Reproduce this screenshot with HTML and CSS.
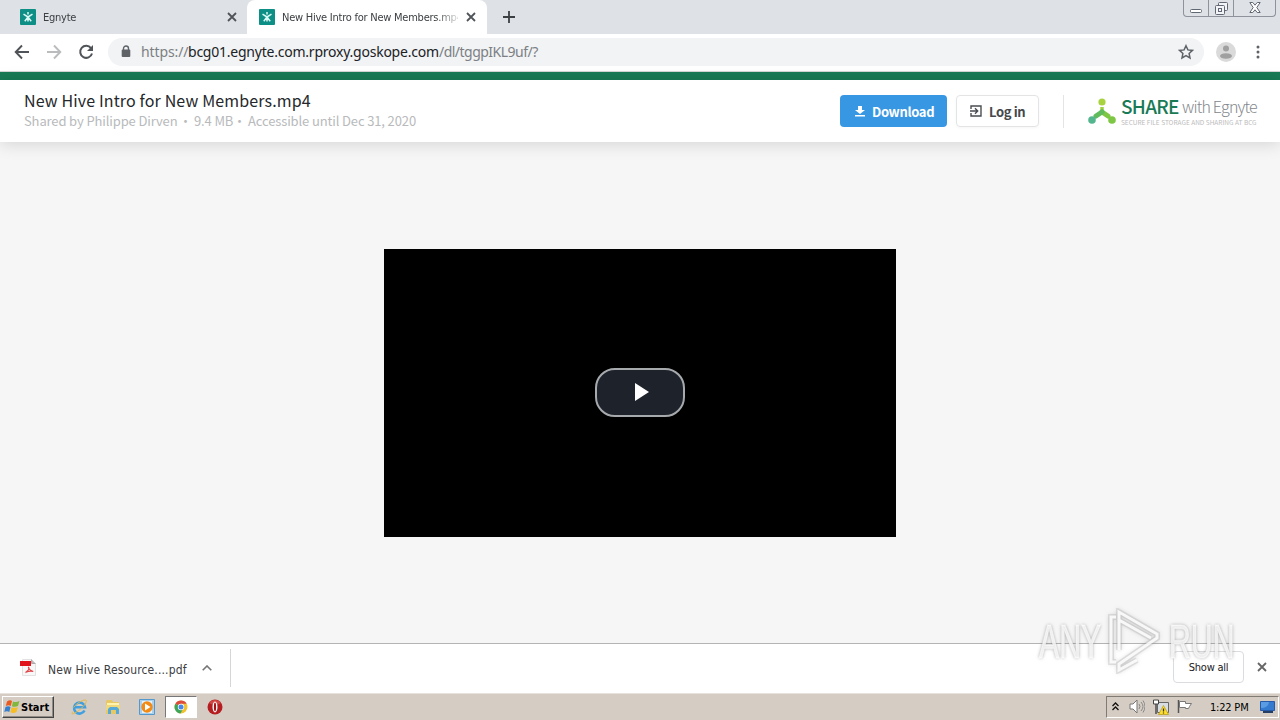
FILE: index.html
```html
<!DOCTYPE html>
<html lang="en">
<head>
  <meta charset="UTF-8" />
  <meta name="viewport" content="width=device-width, initial-scale=1.0"/>
  <title>New Hive Intro for New Members.mp4</title>
  <link rel="stylesheet" href="styles.css">
</head>
<body>

  <svg class="defs" width="0" height="0">
    <symbol id="egnyte" viewBox="0 0 16 16">
      <rect width="16" height="16" rx="1" fill="#0d8f86"/>
      <path d="M8 3v2.500M8 8v4.500M3.500 5.200L8 8l4.500-2.800M4.800 12.300L8 8l3.200 4.300" fill="none" stroke="#d9f7f4" stroke-width="1.500"/>
    </symbol>
    <symbol id="close" viewBox="0 0 10 10">
      <path d="M1 1l8 8M9 1L1 9" fill="none" stroke="currentColor" stroke-width="1.8"/>
    </symbol>
  </svg>

  <!-- Browser tabs -->
  <div class="tab-strip">
    <div class="tab">
      <svg class="favicon"><use href="#egnyte"/></svg>
      <span class="tab-title short">Egnyte</span>
      <svg class="tab-close"><use href="#close"/></svg>
    </div>
    <div class="tab active">
      <svg class="favicon"><use href="#egnyte"/></svg>
      <span class="tab-title">New Hive Intro for New Members.mp4</span>
      <svg class="tab-close"><use href="#close"/></svg>
    </div>
    <svg class="new-tab" viewBox="0 0 12 12"><path d="M6 0v12M0 6h12" stroke="#3c4043" stroke-width="1.8"/></svg>
    <div class="window-buttons">
      <span class="win-btn min"><svg width="12" height="4"><rect x=".5" y=".5" width="11" height="3" rx="1" fill="#fff" stroke="#626873"/></svg></span>
      <span class="win-btn max"><svg width="13" height="13" fill="#f3f4f7" stroke="#626873"><rect x="3.500" y=".5" width="9" height="8" rx="1"/><rect x=".5" y="3.500" width="9" height="9" rx="1"/><rect x="3.500" y="6.500" width="3" height="3"/></svg></span>
      <span class="win-btn end"><svg width="12" height="11"><path d="M.8.5h3L6 3.200 8.200.5h3L7.800 5.500l3.400 5h-3L6 7.800 3.800 10.500h-3l3.400-5z" fill="#fff" stroke="#626873"/></svg></span>
    </div>
  </div>

  <!-- Address bar -->
  <div class="toolbar">
    <svg class="nav-icon" viewBox="0 0 16 16"><path d="M15 8H2M8 1.500L1.700 8 8 14.500" fill="none" stroke="#505459" stroke-width="1.9"/></svg>
    <svg class="nav-icon" viewBox="0 0 16 16"><path d="M1 8h13M8 1.500L14.300 8 8 14.500" fill="none" stroke="#babcbe" stroke-width="1.9"/></svg>
    <svg class="nav-icon" viewBox="0 0 16 16"><path d="M13 4.200A6 6 0 1 0 14 9.500" fill="none" stroke="#505459" stroke-width="2"/><path d="M15 1v6H9z" fill="#505459"/></svg>
    <div class="omnibox">
      <svg class="lock" viewBox="0 0 10 13"><path d="M2.500 5V3.500a2.500 2.500 0 0 1 5 0V5" fill="none" stroke="#5f6368" stroke-width="1.400"/><rect x=".7" y="4.600" width="8.600" height="7.400" rx="1" fill="#5f6368"/></svg>
      <span class="url"><span class="scheme">https://</span><span class="host">bcg01.egnyte.com.rproxy.goskope.com</span><span class="path">/dl/tggpIKL9uf/?</span></span>
      <svg class="star" viewBox="0 0 16 16"><path d="M8 1.700l1.900 4.200 4.600.5-3.400 3.100.9 4.500-4-2.300-4 2.300.9-4.500-3.400-3.100 4.600-.5z" fill="none" stroke="#5f6368" stroke-width="1.500"/></svg>
    </div>
    <svg class="avatar" viewBox="0 0 20 20"><circle cx="10" cy="10" r="10" fill="#dadada"/><circle cx="10" cy="6.500" r="3" fill="#a0a0a0"/><ellipse cx="10" cy="14" rx="6" ry="2.800" fill="#a0a0a0"/></svg>
    <svg class="menu" viewBox="0 0 4 14" fill="#5f6368"><circle cx="2" cy="2" r="1.500"/><circle cx="2" cy="7" r="1.500"/><circle cx="2" cy="12" r="1.500"/></svg>
  </div>

  <div class="brand-bar"></div>

  <header class="file-header">
    <div class="file-info">
      <h1>New Hive Intro for New Members.mp4</h1>
      <p><span class="owner">Shared by Philippe Dirven</span><i>·</i><span class="size">9.4 MB</span><i>·</i><span class="expires">Accessible until Dec 31, 2020</span></p>
    </div>
    <a class="btn download">
      <svg width="10" height="11"><path d="M3 0h4v4h3L5 8 0 4h3zM0 9h10v1.600H0z" fill="#fff"/></svg>
      <span>Download</span>
    </a>
    <a class="btn login">
      <svg width="12" height="12" fill="none" stroke="#4a4d50" stroke-width="1.400"><path d="M1 4V1h10v10H1V8M0 6h7M5 3.300L7.700 6 5 8.700"/></svg>
      <span>Log in</span>
    </a>
    <div class="logo">
      <svg width="28" height="27">
        <path d="M14 9v6" stroke="#a0d040" stroke-width="3.500"/>
        <path d="M14 14l6 4" stroke="#7dc744" stroke-width="5" stroke-linecap="round"/>
        <path d="M14 14l-6 4" stroke="#5fbb5c" stroke-width="5" stroke-linecap="round"/>
        <circle cx="14" cy="4" r="3.600" fill="#a9d23f"/>
        <circle cx="4" cy="22" r="3.800" fill="#54b68e"/>
        <circle cx="24" cy="22" r="3.800" fill="#7dc744"/>
      </svg>
      <div class="logo-text">
        <div class="logo-name"><b>SHARE</b><span>with Egnyte</span></div>
        <div class="tagline">SECURE FILE STORAGE AND SHARING AT BCG</div>
      </div>
    </div>
  </header>

  <main class="preview">
    <div class="player">
      <div class="play"><svg width="14" height="20"><path d="M0 1v18l14-9z" fill="#fff"/></svg></div>
    </div>
  </main>

  <!-- Downloads -->
  <div class="download-shelf">
    <div class="download-item">
      <svg width="16" height="17"><path d="M2.500.5h9l4 4v12h-13z" fill="#f8f8f8" stroke="#e2e2e2"/><path d="M11.500.5v4h4" fill="#bbb" stroke="#aaa"/><path d="M0 2h11v5H0z" fill="#e1131b"/><path d="M6 13c3-2 3.500-3 2.800-4.500s-1 2.500 4.500 4c-3-.8-5-.3-7.300.8z" fill="none" stroke="#e04548" stroke-width="1.100"/></svg>
      <span class="download-name">New Hive Resource....pdf</span>
      <svg class="chevron" width="10" height="6"><path d="M.7 5.300L5 1l4.300 4.300" fill="none" stroke="#757575" stroke-width="1.600"/></svg>
    </div>
    <span class="show-all">Show all</span>
    <svg class="shelf-close"><use href="#close"/></svg>
  </div>

  <!-- Windows taskbar -->
  <div class="taskbar">
    <div class="start">
      <svg width="17" height="16" viewBox="0 0 17 16"><path d="M3 2.500Q6 .5 8 2L6.800 7Q4.500 5.600 1.800 7z" fill="#e95c20"/><path d="M9 2.400Q12 4 15.500 2L14 7Q11 8.500 7.900 7.200z" fill="#82b73d"/><path d="M1.500 8Q4.300 6.600 6.500 8L5.300 13Q3 11.500.3 13z" fill="#347fce"/><path d="M7.600 8.200Q11 9.600 13.800 8L12.500 13Q9.500 14.800 6.400 13.300z" fill="#f6bd25"/></svg>
      <span>Start</span>
    </div>
    <span class="task ie"><svg width="18" height="18" viewBox="0 0 18 18"><path d="M14.500 12.500A5.500 5.500 0 1 1 15 9.300H5" fill="none" stroke="#3f9fe0" stroke-width="2.600"/><path d="M3 13.500C0 18 5 15.500 10 11.500S18.500 1.500 15 2 7 5 3.500 9.500" fill="none" stroke="#e6b844" stroke-width="1"/></svg></span>
    <span class="task"><svg width="16" height="16"><path d="M1 2l1-1h5l1 2h6v12H1z" fill="#e7c865"/><path d="M2 4h12v5H2z" fill="#fff2ad"/><path d="M1 6h14v5H1z" fill="#efd77b"/><path d="M3 15v-5l2-2h7l2 2v5h-3v-4H6v4z" fill="#55a9d9"/></svg></span>
    <span class="task"><svg width="16" height="16"><path d="M.5.5h15v15H.5z" fill="#a9d1ef" stroke="#5598cc"/><path d="M3 2h10v12H3z" fill="#e5f2fa"/><circle cx="8" cy="8" r="5.700" fill="#f28a16"/><path d="M6 4.500v7L11.500 8z" fill="#fff"/></svg></span>
    <span class="task current"><svg width="14" height="14" viewBox="0 0 14 14"><circle cx="7" cy="7" r="6.500" fill="#f2c12f"/><path d="M7 7L1.400 3.700a6.500 6.500 0 0 1 11.300 0H7z" fill="#dc4b3e"/><path d="M7 7l-5.600-3.300A6.500 6.500 0 0 0 6.500 13.500L9.500 8z" fill="#3da45b"/><circle cx="7" cy="7" r="3.200" fill="#fff"/><circle cx="7" cy="7" r="2.500" fill="#4687e8"/></svg></span>
    <span class="task opera"><svg width="16" height="16"><circle cx="8" cy="8" r="7.500" fill="#b51d20"/><path d="M2 4a7.500 7.500 0 0 1 12 0L8 7z" fill="#d04745"/><ellipse cx="8" cy="8" rx="2.500" ry="5.400" fill="#fff"/><ellipse cx="8" cy="8" rx="1.100" ry="4.400" fill="#a01418"/></svg></span>
    <div class="tray">
      <svg class="more" width="7" height="9"><path d="M.5 4l3-3 3 3M.5 8l3-3 3 3" fill="none" stroke="#111" stroke-width="1.300"/></svg>
      <svg class="sound" width="16" height="15"><path d="M1 5h3l4-4v13l-4-4H1z" fill="#fff" stroke="#777"/><path d="M10 5q2 2.500 0 5M12 3q4 4.500 0 9M14 1.500q4 6 0 12" fill="none" stroke="#888"/></svg>
      <svg class="network" width="16" height="16"><path d="M4.500 3.500h11v10h-11z" fill="#d7dde2" stroke="#666"/><path d="M3 5v10" stroke="#444" stroke-width="1.400"/><path d="M.5 1h5v4h-5z" fill="#fff" stroke="#444"/><path d="M10.500 6.500l5 9H5.500z" fill="#ffdf2b" stroke="#b69812" stroke-width=".7"/><path d="M10.500 9.500v3M10.500 13.500v1" stroke="#333" stroke-width="1.300"/></svg>
      <svg class="flag" width="16" height="15"><path d="M1.500 1v13" stroke="#555" stroke-width="1.500"/><path d="M2.500 2.500h6v2h6l-2 3 -1 2h-3v-1h-6z" fill="#fff" stroke="#777"/></svg>
      <span class="clock">1:22 PM</span>
      <svg class="desktop" width="15" height="14"><path d="M.5 1.500h14v9H.5z" fill="#347bd0" stroke="#245aa8"/><path d="M1 2h8q-1 6-8 6z" fill="#5a9ce3"/><path d="M3 11h10v2H3z" fill="#243f65"/></svg>
    </div>
  </div>

  <!-- Recording watermark -->
  <div class="watermark">
    <span class="mark-any">ANY</span>
    <svg class="mark-play" width="60" height="66"><path id="mark" d="M11 9H6v45h5M14 42V4l38 22v4L14 56v6l18-10M14 12l32 18M14 42V15" fill="none"/><use href="#mark" class="halo"/><use href="#mark" class="line"/></svg>
    <span class="mark-run">RUN</span>
  </div>

</body>
</html>
```
FILE: styles.css
```css
* {
  box-sizing: border-box;
}
body {
  margin: 0;
  width: 1280px;
  height: 720px;
  overflow: hidden;
  display: flex;
  flex-direction: column;
  position: relative;
  font-family: "DejaVu Sans Condensed", "DejaVu Sans", sans-serif;
  background: #f6f6f6;
}
svg {
  display: block;
  flex: none;
}
.defs {
  position: absolute;
}
.tab-strip {
  height: 34px;
  flex: none;
  display: flex;
  background: #dee1e6;
}
.tab {
  width: 247px;
  height: 34px;
  padding: 0 10px 0 20px;
  display: flex;
  align-items: center;
}
.tab.active {
  width: 240px;
  padding: 0 11px 0 12px;
  background: #fff;
  border-radius: 8px 8px 0 0;
}
.favicon {
  width: 16px;
  height: 16px;
}
.tab-title {
  width: 176px;
  margin-left: 7px;
  margin-right: 8px;
  overflow: hidden;
  white-space: nowrap;
  font-size: 11px;
  letter-spacing: -0.24px;
  color: #3c4043;
  -webkit-mask-image: linear-gradient(to right, #000 154px, transparent 180px);
  mask-image: linear-gradient(to right, #000 154px, transparent 180px);
}
.tab-close {
  width: 10px;
  height: 10px;
  color: #505459;
}
.new-tab {
  width: 12px;
  height: 12px;
  margin: 11px 0 0 16px;
}
.window-buttons {
  display: flex;
  height: 17px;
  width: 93px;
  margin: 0 4px 0 auto;
  border: 1px solid #8d929b;
  border-top: 0;
  border-radius: 0 0 4px 4px;
}
.win-btn {
  width: 25px;
  display: flex;
  align-items: flex-end;
  justify-content: center;
  padding-bottom: 3px;
  border-right: 1px solid #8d929b;
}
.win-btn.max {
  padding-bottom: 1px;
}
.win-btn.end {
  width: 41px;
  border: 0;
}
.toolbar {
  height: 38px;
  flex: none;
  display: flex;
  align-items: center;
  padding: 0 20px 2px 14px;
  background: #fff;
  border-bottom: 1px solid #d5d5d5;
}
.nav-icon {
  width: 16px;
  height: 16px;
  margin-right: 16px;
}
.omnibox {
  width: 1096px;
  height: 28px;
  margin-left: -2px;
  padding: 0 10px 0 13px;
  border-radius: 14px;
  background: #f1f3f4;
  display: flex;
  align-items: center;
}
.lock {
  width: 10px;
  height: 13px;
}
.url {
  display: flex;
  margin-left: 10px;
  white-space: nowrap;
  font-family: "Noto Sans", sans-serif;
  font-size: 14px;
  color: #7c8084;
}
.scheme {
  width: 47px;
  letter-spacing: -0.1px;
}
.host {
  width: 251px;
  letter-spacing: -0.23px;
  color: #202124;
}
.path {
  letter-spacing: -0.52px;
}
.star {
  width: 16px;
  height: 16px;
  margin-left: auto;
}
.avatar {
  width: 20px;
  height: 20px;
  margin-left: 12px;
}
.menu {
  width: 4px;
  height: 14px;
  margin-left: auto;
}
.brand-bar {
  height: 8px;
  flex: none;
  background: #197a56;
}
.file-header {
  height: 62px;
  flex: none;
  display: flex;
  align-items: center;
  padding: 0 24px;
  position: relative;
  font-family: "Noto Sans CJK SC", sans-serif;
  background: #fff;
  box-shadow: 0 2px 16px rgba(0,0,0,0.14);
}
.file-info {
  width: 816px;
  padding-bottom: 4px;
  white-space: nowrap;
}
h1 {
  margin: 0;
  font-size: 16px;
  line-height: 22px;
  font-weight: 400;
  letter-spacing: 0.14px;
  color: #25282b;
}
.file-info p {
  display: flex;
  margin: 0;
  font-size: 13px;
  line-height: 19px;
  letter-spacing: -0.13px;
  color: #b8babc;
}
.file-info i {
  width: 17px;
  text-align: center;
  font-style: normal;
}
.owner {
  width: 153px;
}
.size {
  width: 37px;
}
.btn {
  height: 32px;
  display: flex;
  align-items: center;
  white-space: nowrap;
  border-radius: 4px;
  font-size: 13px;
  font-weight: 700;
  letter-spacing: -0.35px;
}
.download {
  width: 107px;
  padding-left: 15px;
  gap: 7px;
  background: #3897e3;
  color: #fff;
}
.login {
  width: 83px;
  margin-left: 9px;
  padding-left: 13px;
  gap: 7px;
  border: 1px solid #e3e4e5;
  box-shadow: 0 1px 3px rgba(0,0,0,0.04);
  color: #45484b;
}
.logo {
  display: flex;
  align-items: center;
  width: 193px;
  height: 33px;
  margin-left: 24px;
  padding-left: 24px;
  border-left: 1px solid #e4e4e4;
}
.logo-text {
  margin-left: 5px;
  white-space: nowrap;
}
.logo-name {
  display: flex;
  height: 21px;
  line-height: 18px;
  color: #83888c;
  font-size: 16px;
  font-weight: 300;
  letter-spacing: -0.85px;
}
.logo-name b {
  width: 61px;
  font-size: 19px;
  font-weight: 500;
  letter-spacing: -0.7px;
  color: #197a56;
}
.tagline {
  font-size: 6.5px;
  line-height: 8px;
  color: #bbb;
}
.preview {
  flex: 1;
  display: flex;
  justify-content: center;
  align-items: flex-start;
  padding-top: 107px;
}
.player {
  width: 512px;
  height: 288px;
  padding-bottom: 2px;
  background: #000;
  display: flex;
  align-items: center;
  justify-content: center;
}
.play {
  width: 90px;
  height: 49px;
  display: flex;
  align-items: center;
  justify-content: center;
  padding-left: 3px;
  border: 2px solid #a7aaad;
  border-radius: 20px;
  background: #1d222b;
}
.download-shelf {
  height: 50px;
  flex: none;
  display: flex;
  align-items: center;
  padding: 0 13px 2px 0;
  background: #fff;
  border-top: 1px solid #b4b4b4;
}
.download-item {
  width: 231px;
  height: 38px;
  display: flex;
  align-items: center;
  padding-left: 20px;
  border-right: 1px solid #d6d6d6;
}
.download-name {
  width: 140px;
  margin: 4px 14px 0 12px;
  white-space: nowrap;
  font-size: 12px;
  letter-spacing: 0.14px;
  color: #3c4043;
}
.show-all {
  width: 71px;
  height: 32px;
  margin: 0 13px 2px auto;
  padding-top: 1px;
  line-height: 30px;
  text-align: center;
  font-size: 11px;
  letter-spacing: -0.25px;
  color: #202124;
  border: 1px solid #dadce0;
  border-radius: 4px;
}
.shelf-close {
  width: 10px;
  height: 10px;
  margin-bottom: 2px;
  color: #666;
}
.taskbar {
  height: 27px;
  flex: none;
  display: flex;
  align-items: center;
  padding: 1px 1px 2px 2px;
  background: #d5cdc4;
  border-top: 1px solid #e7e2dc;
}
.start {
  width: 52px;
  height: 22px;
  margin-right: 9px;
  display: flex;
  align-items: center;
  padding-left: 1px;
  border: 1px solid #fff;
  border-right-color: #444;
  border-bottom-color: #444;
  box-shadow: inset -1px -1px #908b85;
  font-size: 11px;
  font-weight: 700;
  color: #000;
}
.start span {
  padding-top: 2px;
}
.task {
  width: 32px;
  height: 22px;
  margin-right: 2px;
  display: flex;
  align-items: center;
  justify-content: center;
}
.task.current {
  border: 1px solid #777;
  border-right-color: #fff;
  border-bottom-color: #fff;
  background: #fff;
}
.tray {
  width: 173px;
  height: 22px;
  margin-left: auto;
  display: flex;
  align-items: center;
  padding-left: 5px;
  border: 1px solid #817b75;
  border-right-color: #fff;
  border-bottom-color: #fff;
}
.sound {
  margin-left: 10px;
}
.network {
  margin-left: 8px;
}
.flag {
  margin-left: 8px;
}
.clock {
  width: 40px;
  margin-left: 17px;
  margin-right: 10px;
  padding-top: 2px;
  white-space: nowrap;
  font-size: 11px;
  letter-spacing: -0.2px;
  color: #000;
}
.watermark {
  position: absolute;
  left: 1039px;
  top: 608px;
  width: 196px;
  height: 66px;
  display: flex;
  align-items: center;
  font-family: "Liberation Sans", sans-serif;
  font-size: 48px;
  color: rgba(255,255,255,0.8);
  -webkit-text-stroke: 1.5px rgba(255,255,255,0.5);
  text-shadow: 0 0 4px rgba(70,70,70,0.6);
}
.watermark span {
  width: 66px;
  transform: scaleX(0.63);
  transform-origin: left;
}
.watermark .mark-run {
  margin-left: 4px;
}
.mark-play {
  filter: drop-shadow(0 0 2px rgba(90,90,90,0.3));
}
.halo {
  stroke: rgba(160,160,160,0.25);
  stroke-width: 6px;
}
.line {
  stroke: rgba(255,255,255,0.85);
  stroke-width: 3px;
}
```
